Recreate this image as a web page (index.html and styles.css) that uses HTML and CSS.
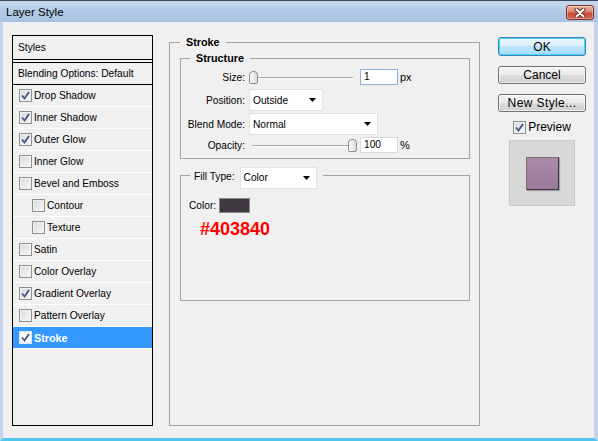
FILE: index.html
```html
<!DOCTYPE html>
<html>
<head>
<meta charset="utf-8">
<title>Layer Style</title>
<link rel="stylesheet" href="styles.css">
</head>
<body>
<div class="window">
  <header class="titlebar">
    <span class="title">Layer Style</span>
    <button class="close" aria-label="Close">
      <svg width="14" height="10" viewBox="0 0 14 10">
        <path d="M3.5 1.5 L10.5 8.5 M10.5 1.5 L3.5 8.5" stroke="#6b2417" stroke-width="4" stroke-linecap="round" fill="none"/>
        <path d="M3.5 1.5 L10.5 8.5 M10.5 1.5 L3.5 8.5" stroke="#fff" stroke-width="2.2" stroke-linecap="round" fill="none"/>
      </svg>
    </button>
  </header>

  <div class="client">
    <!-- effect list -->
    <div class="styles-list">
      <div class="list-head">Styles</div>
      <div class="list-blend">Blending Options: Default</div>
      <div class="item"><span class="cb on"><svg viewBox="0 0 11 11"><path d="M2 5.5 L4.5 8.5 L9 2"/></svg></span>Drop Shadow</div>
      <div class="item"><span class="cb on"><svg viewBox="0 0 11 11"><path d="M2 5.5 L4.5 8.5 L9 2"/></svg></span>Inner Shadow</div>
      <div class="item"><span class="cb on"><svg viewBox="0 0 11 11"><path d="M2 5.5 L4.5 8.5 L9 2"/></svg></span>Outer Glow</div>
      <div class="item"><span class="cb"></span>Inner Glow</div>
      <div class="item"><span class="cb"></span>Bevel and Emboss</div>
      <div class="item sub"><span class="cb"></span>Contour</div>
      <div class="item sub"><span class="cb"></span>Texture</div>
      <div class="item"><span class="cb"></span>Satin</div>
      <div class="item"><span class="cb"></span>Color Overlay</div>
      <div class="item"><span class="cb on"><svg viewBox="0 0 11 11"><path d="M2 5.5 L4.5 8.5 L9 2"/></svg></span>Gradient Overlay</div>
      <div class="item"><span class="cb"></span>Pattern Overlay</div>
      <div class="item selected"><span class="cb on"><svg viewBox="0 0 11 11"><path d="M2 5.5 L4.5 8.5 L9 2"/></svg></span>Stroke</div>
    </div>

    <!-- stroke settings -->
    <div class="settings">
      <fieldset class="group group-stroke">
        <legend>Stroke</legend>

        <fieldset class="group group-structure">
          <legend>Structure</legend>
          <div class="row row-size">
            <span class="lbl">Size:</span>
            <div class="slider slider-min"><span class="thumb"></span></div>
            <div class="num focus">1</div>
            <span class="unit">px</span>
          </div>
          <div class="row row-pos">
            <span class="lbl">Position:</span>
            <div class="select sel-pos"><span>Outside</span><svg class="arrow" width="7" height="4" viewBox="0 0 7 4"><path d="M0 0 H7 L3.5 4 Z"/></svg></div>
          </div>
          <div class="row row-blend">
            <span class="lbl">Blend Mode:</span>
            <div class="select sel-blend"><span>Normal</span><svg class="arrow" width="7" height="4" viewBox="0 0 7 4"><path d="M0 0 H7 L3.5 4 Z"/></svg></div>
          </div>
          <div class="row row-opacity">
            <span class="lbl">Opacity:</span>
            <div class="slider slider-max"><span class="thumb"></span></div>
            <div class="num">100</div>
            <span class="unit">%</span>
          </div>
        </fieldset>

        <fieldset class="group group-fill">
          <legend>
            <span class="fill-lbl">Fill Type:</span>
            <div class="select sel-fill"><span>Color</span><svg class="arrow" width="7" height="4" viewBox="0 0 7 4"><path d="M0 0 H7 L3.5 4 Z"/></svg></div>
          </legend>
          <div class="color-row">
            <span>Color:</span>
            <span class="swatch"></span>
          </div>
          <div class="hex">#403840</div>
        </fieldset>
      </fieldset>
    </div>

    <!-- dialog actions -->
    <div class="actions">
      <button class="btn btn-ok">OK</button>
      <button class="btn">Cancel</button>
      <button class="btn btn-new">New Style...</button>
      <div class="preview-row">
        <span class="cb on"><svg viewBox="0 0 11 11"><path d="M2 5.5 L4.5 8.5 L9 2"/></svg></span>
        <span>Preview</span>
      </div>
      <div class="preview-box"><span class="preview-swatch"></span></div>
    </div>
  </div>
</div>
</body>
</html>
```
FILE: styles.css
```css
* { box-sizing: border-box; }

html, body {
  margin: 0;
  padding: 0;
}

body {
  width: 598px;
  height: 441px;
  overflow: hidden;
  background: #f0f0f0;
  font-family: "Liberation Sans", Arial, sans-serif;
  font-size: 10.2px;
  color: #000;
}

.window {
  width: 598px;
  height: 441px;
  display: flex;
  flex-direction: column;
}

/* ---------- title bar ---------- */
.titlebar {
  height: 22px;
  flex: none;
  border-top: 1px solid #3d4654;
  background: linear-gradient(#c6d8ee, #b4cbe7 45%, #a8c2e3);
  display: flex;
  align-items: flex-start;
  justify-content: space-between;
  padding: 0 4px 0 6px;
}

.title {
  font-size: 11.5px;
  line-height: 22px;
}

.close {
  margin-top: 4px;
  width: 28px;
  height: 15px;
  padding: 0;
  border: 1px solid #833425;
  border-radius: 3px;
  background: linear-gradient(#eab5a8, #d98571 45%, #c24a30 55%, #d5694f);
  box-shadow: inset 0 0 0 1px rgba(255, 255, 255, 0.35);
  display: flex;
  align-items: center;
  justify-content: center;
}

/* ---------- client area ---------- */
.client {
  flex: 1;
  display: flex;
  padding: 13px 0 12px 9px;
  border-left: 3px solid #c3d5ec;
  border-right: 4px solid #c3d5ec;
  border-bottom: 3px solid #52c6ea;
  background: #f0f0f0;
}

/* ---------- effect list ---------- */
.styles-list {
  width: 141px;
  flex: none;
  border: 1px solid #000;
  display: flex;
  flex-direction: column;
}

.list-head {
  height: 24px;
  line-height: 23px;
  padding-left: 5px;
  border-bottom: 1px solid #000;
  margin-bottom: 2px;
}

.list-blend {
  height: 23px;
  line-height: 21px;
  padding-left: 5px;
  border-top: 1px solid #000;
  border-bottom: 1px solid #000;
}

.item {
  height: 22px;
  display: flex;
  align-items: center;
  gap: 2px;
  padding-left: 6px;
  border-bottom: 1px solid #fff;
}

.item.sub { padding-left: 19px; }

.item.selected {
  background: #3399ff;
  color: #fff;
  font-weight: bold;
  font-size: 10.8px;
}

/* checkbox */
.cb {
  width: 13px;
  height: 13px;
  flex: none;
  border: 1px solid #8e8f8f;
  background: linear-gradient(135deg, #d9d9d9, #f8f8f8);
  box-shadow: inset 0 0 0 1px #f2f2f2;
  display: flex;
  align-items: center;
  justify-content: center;
}

.cb svg {
  width: 11px;
  height: 11px;
}

.cb svg path {
  fill: none;
  stroke: #44578a;
  stroke-width: 1.9;
}

.selected .cb {
  background: #fff;
  border-color: #d9e7f7;
}

/* ---------- settings ---------- */
.settings {
  width: 311px;
  flex: none;
  margin-left: 16px;
  display: flex;
  flex-direction: column;
}

.group {
  margin: 0;
  min-width: 0;
  border: 1px solid #a3a3a3;
}

.group > legend {
  padding: 0 6px;
  font-weight: bold;
  font-size: 10.8px;
  line-height: 15px;
}

.group-stroke {
  flex: 1;
  padding: 1px 9px 0 10px;
}

.group-structure {
  padding: 3px 0 5px 0;
}

.group-structure > legend { margin-left: 9px; }

.row {
  display: flex;
  align-items: center;
}

.row-size { height: 16px; }
.row-pos { height: 22px; margin-top: 4px; }
.row-blend { height: 22px; margin-top: 2px; }
.row-opacity { height: 16px; margin-top: 2px; }

.lbl {
  width: 64px;
  text-align: right;
  margin-right: 4px;
  flex: none;
}

/* slider */
.slider {
  width: 108px;
  height: 13px;
  margin-right: 3px;
  display: flex;
  background:
    linear-gradient(#a9a9a9, #a9a9a9) 3px 6px / calc(100% - 7px) 1px no-repeat,
    linear-gradient(#fff, #fff) 3px 7px / calc(100% - 7px) 1px no-repeat;
}

.slider-max { justify-content: flex-end; }

.thumb {
  width: 9px;
  height: 13px;
  border: 1px solid #8c8c8c;
  border-radius: 4px 4px 2px 2px;
  background: linear-gradient(90deg, #fdfdfd, #dcdcdc);
}

/* numeric field */
.num {
  width: 38px;
  height: 16px;
  line-height: 14px;
  padding-left: 3px;
  background: #fff;
  border: 1px solid #d9d9d9;
}

.num.focus { border-color: #8fb1d8; }

.unit {
  margin-left: 2px;
  font-size: 11px;
}

/* drop-down */
.select {
  height: 22px;
  display: flex;
  align-items: center;
  justify-content: space-between;
  padding: 0 6px 0 3px;
  background: #fff;
  border: 1px solid #e3e3e3;
}

.sel-pos { width: 74px; }
.sel-blend { width: 129px; }
.sel-fill { width: 77px; }

.arrow path { fill: #000; }

/* fill type */
.group-fill {
  margin-top: 8px;
  padding: 14px 0 61px 8px;
}

.group-fill > legend {
  height: 17px;
  margin-left: 1px;
  padding: 0 6px 0 4px;
  display: flex;
  align-items: flex-start;
  gap: 5px;
  font-weight: normal;
  font-size: 10.2px;
  line-height: 20px;
}

.color-row {
  height: 15px;
  display: flex;
  align-items: center;
  gap: 3px;
}

.swatch {
  width: 31px;
  height: 15px;
  background: #403840;
  border: 1px solid #8a8a8a;
}

.hex {
  margin: 6px 0 0 11px;
  font-size: 18px;
  line-height: 20px;
  font-weight: bold;
  color: #ff0000;
}

/* ---------- actions ---------- */
.actions {
  width: 88px;
  flex: none;
  margin-left: 18px;
  padding-top: 2px;
  display: flex;
  flex-direction: column;
  align-items: center;
}

.btn {
  width: 88px;
  height: 18px;
  padding: 0;
  margin: 0 0 10px;
  border: 1px solid #707070;
  border-radius: 3px;
  background: linear-gradient(#f2f2f2, #ebebeb 50%, #dddddd 50%, #cfcfcf);
  box-shadow: inset 0 0 0 1px rgba(255, 255, 255, 0.7);
  font-family: "Liberation Sans", Arial, sans-serif;
  font-size: 12px;
  line-height: 16px;
  color: #000;
}

.btn-ok {
  height: 19px;
  border-color: #3c7fb1;
  background: linear-gradient(#eaf6fd, #d9f0fc 50%, #bee6fd 50%, #a7d9f5);
  box-shadow: inset 0 0 0 1px #48d7fb;
}

.btn-new {
  margin-bottom: 9px;
  letter-spacing: 0.4px;
}

.preview-row {
  display: flex;
  align-items: center;
  gap: 2px;
  font-size: 12px;
  line-height: 13px;
}

.preview-box {
  width: 66px;
  height: 66px;
  margin-top: 6px;
  background: #d8d8d8;
  border: 1px solid #cacaca;
  display: flex;
  align-items: center;
  justify-content: center;
}

.preview-swatch {
  width: 33px;
  height: 33px;
  background: linear-gradient(#aa8ba8, #9b7a99);
  border: 1px solid #7c6a7b;
  border-right-color: #3e343e;
  border-bottom-color: #3e343e;
  box-shadow: 1px 1px 1px rgba(0, 0, 0, 0.25);
}
```
